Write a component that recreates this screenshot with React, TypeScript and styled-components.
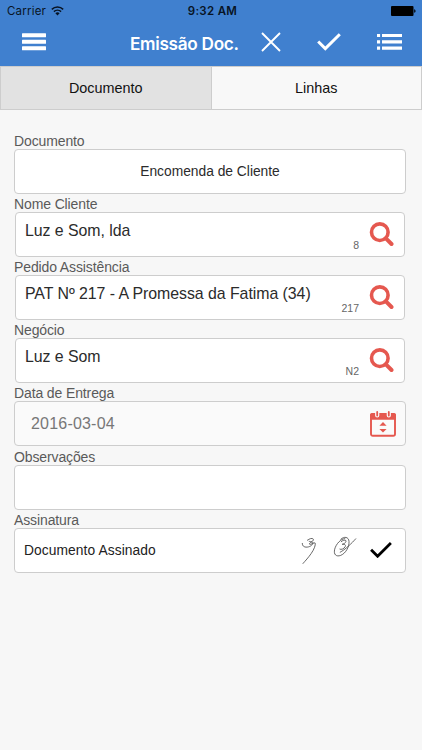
import React from "react";
import styled, { createGlobalStyle } from "styled-components";

const GlobalStyle = createGlobalStyle`
  * { box-sizing: border-box; }
  body { margin: 0; background: #f7f7f7; font-family: "Liberation Sans", Arial, sans-serif; }
  svg { display: block; flex: none; }
`;

const Screen = styled.main`
  width: 422px;
  height: 750px;
  background: #f7f7f7;
  overflow: hidden;
`;

const Header = styled.header`
  height: 66px;
  background: #4080cf;
`;

const StatusBar = styled.div`
  height: 22px;
  display: grid;
  grid-template-columns: 1fr auto 1fr;
  align-items: center;
  padding: 0 6px 0 7px;
  font: 400 11.5px/20px Inter, sans-serif;
  color: #081425;
`;

const Carrier = styled.div`
  display: flex;
  align-items: center;
  gap: 5px;
  letter-spacing: 0.2px;
`;

const Clock = styled.div`
  padding-left: 2px;
  font-weight: 600;
  letter-spacing: 0.3px;
`;

const Battery = styled.div`
  justify-self: end;
`;

const NavBar = styled.div`
  height: 44px;
  display: flex;
  align-items: center;
  padding: 0 20px 4px 22px;
`;

const Title = styled.h1`
  margin: 3px 0 0 84px;
  width: 131px;
  font: 600 17.2px/24px Inter, sans-serif;
  letter-spacing: -0.3px;
  color: #fff;
  white-space: nowrap;
`;

const Actions = styled.div`
  flex: 1;
  display: flex;
  justify-content: space-between;
  align-items: center;
`;

const Tabs = styled.nav`
  height: 44px;
  display: flex;
`;

const Tab = styled.button<{ $active?: boolean }>`
  flex: 1;
  padding: 0;
  border: 1px solid #cdcdcd;
  border-left-width: ${(p) => (p.$active ? "1px" : "0")};
  background: ${(p) => (p.$active ? "#e2e2e2" : "#f8f8f8")};
  font: 14.4px "Liberation Sans", sans-serif;
  color: #111;
`;

const Form = styled.section`
  padding: 21.1px 16px 0 14px;
`;

const Field = styled.div`
  height: 63.1px;
`;

const Label = styled.label`
  display: block;
  height: 18px;
  font-size: 14px;
  line-height: 20px;
  letter-spacing: -0.12px;
  color: #5a5a5a;
  white-space: nowrap;
`;

const Box = styled.div<{ $inset?: boolean; $tint?: boolean }>`
  height: 45px;
  margin: 0 ${(p) => (p.$inset ? "1px" : "0")};
  display: flex;
  align-items: center;
  border: 1px solid #cdcdcd;
  border-radius: 4px;
  background: ${(p) => (p.$tint ? "#fafafa" : "#fff")};
`;

const Choice = styled.span`
  flex: 1;
  text-align: center;
  font-size: 13.8px;
  line-height: 18px;
  padding-top: 1px;
  color: #2b2b2b;
`;

const LookupValue = styled.span`
  flex: 1;
  align-self: flex-start;
  padding: 8px 0 0 9px;
  font-size: 15.9px;
  line-height: 20px;
  letter-spacing: -0.05px;
  color: #2b2b2b;
  white-space: nowrap;
`;

const Code = styled.span`
  align-self: flex-end;
  padding-bottom: 4px;
  margin-right: 10px;
  font-size: 10.5px;
  line-height: 13px;
  color: #666;
`;

const DateValue = styled.span`
  flex: 1;
  padding-left: 16px;
  font-size: 16px;
  letter-spacing: 0.2px;
  color: #777;
`;

const SignedText = styled.span`
  flex: 1;
  padding: 1px 0 0 9px;
  font-size: 13.8px;
  letter-spacing: 0.08px;
  color: #222;
`;

const WifiIcon = () => (
  <svg width="13" height="10" viewBox="0 0 13 10" fill="none" stroke="#081425" strokeWidth="1.5">
    <path d="M.8 3.4a8.2 8.2 0 0 1 11.4 0M2.9 5.6a5.2 5.2 0 0 1 7.2 0" />
    <path d="M4.4 7.2a3 3 0 0 1 4.2 0L6.5 9.4Z" fill="#081425" stroke="none" />
  </svg>
);

const BatteryIcon = () => (
  <svg width="25" height="10" viewBox="0 0 25 10">
    <rect width="22.5" height="10" rx="1" />
    <path d="M23.2 3.2c1.8.3 1.8 3.3 0 3.6Z" />
  </svg>
);

const MenuIcon = () => (
  <svg width="24" height="18" viewBox="0 0 24 18" fill="#fff">
    <rect y="0.3" width="24" height="4" rx=".5" />
    <rect y="6.8" width="24" height="4" rx=".5" />
    <rect y="13.2" width="24" height="4" rx=".5" />
  </svg>
);

const CloseIcon = () => (
  <svg width="20" height="20" viewBox="0 0 20 20" stroke="#fff" strokeWidth="1.9">
    <path d="M1 1l18 18M19 1 1 19" />
  </svg>
);

const CheckIcon = ({ color, width }: { color: string; width: number }) => (
  <svg width={width} height={(width * 18) / 24} viewBox="0 0 24 18" fill="none" stroke={color} strokeWidth="3">
    <path d="M1.2 8.5 8.3 15.6 22.8 1.2" />
  </svg>
);

const ListIcon = () => (
  <svg width="25" height="16" viewBox="0 0 25 16" fill="#fff">
    <path d="M0 0h3.1v3.1H0zM5 0h20v3.1H5zM0 6.3h3.1v3.1H0zM5 6.3h20v3.1H5zM0 12.6h3.1v3.1H0zM5 12.6h20v3.1H5z" />
  </svg>
);

const SearchSvg = styled.svg`
  margin: 0 10px 0 0;
`;

const SearchIcon = () => (
  <SearchSvg width="25" height="25" viewBox="0 0 25 25" fill="none" stroke="#e5584f">
    <circle cx="10.8" cy="10.2" r="8.3" strokeWidth="3.6" />
    <path d="m16.9 16.4 5.6 5.6" strokeWidth="4" strokeLinecap="round" />
  </SearchSvg>
);

const CalendarSvg = styled.svg`
  margin: 0 9px 0 0;
`;

const CalendarIcon = () => (
  <CalendarSvg width="26" height="27" viewBox="0 0 26 27">
    <rect x="1" y="4" width="24" height="21.8" rx="1.8" fill="none" stroke="#e5584f" strokeWidth="1.9" />
    <path d="M0 9.7V5.3C0 4 1 3.1 2.2 3.1h21.6C25 3.1 26 4 26 5.3v4.4Z" fill="#e5584f" />
    <path d="M7.2 2v3.5M18.8 2v3.5" stroke="#fafafa" strokeWidth="4.2" strokeLinecap="round" />
    <path d="M7.2 2v3.5M18.8 2v3.5" stroke="#e5584f" strokeWidth="1.8" strokeLinecap="round" />
    <path d="m13 12 3.6 3.7H9.4ZM13 22.5l3.6-3.6H9.4Z" fill="#e5584f" />
  </CalendarSvg>
);

const SignatureSvg = styled.svg`
  margin-right: 13px;
`;

const SignatureIcon = () => (
  <SignatureSvg width="56" height="30" viewBox="0 0 56 30" fill="none" stroke="#444" strokeWidth=".8" strokeLinecap="round" strokeLinejoin="round">
    <path d="M6.4 5.2C8.3 3.8 11.3 2.6 12.3 4.1c.6 2-2.3 3.3-4.2 2.2M1.3 8.4c-.2 3.2 2.8 4.3 6.1 3.5 4-.9 5.4-4.4 3.9-4.7-1.2-.3-3.4 1-2.7 2 1.1 1.2 4.7-2.6 5.6-1.1.6 1.5-1 6.2-4 10.4-2.5 3.7-6 7.5-8.2 10" />
    <path d="M43.8 3.6C39.9 3.7 35 9 33.7 14.2c-1.4 5.5 1.7 7.8 6 6.2 5.4-2.2 8.7-9.1 8.3-14-.3-4.5-4.8-5.4-8.2-2.2M40.2 6.7c2.1-2 5-2.2 4.8-.4-.2 1.7-2.9 3-3.8 3 2.6-.3 4 .6 2.9 2.5-1.2 2.1-4 3.2-5.2 2.4M54.7 3.8C51 8.1 44 14.8 39.2 17.2" />
  </SignatureSvg>
);

const SignedCheck = styled.div`
  margin: 0 13px 0 0;
`;

const LookupField = ({ label, value, code }: { label: string; value: string; code: string }) => (
  <Field>
    <Label>{label}</Label>
    <Box $inset>
      <LookupValue>{value}</LookupValue>
      <Code>{code}</Code>
      <SearchIcon />
    </Box>
  </Field>
);

export default function App() {
  return (
    <>
      <GlobalStyle />
      <Screen>
        <Header>
          <StatusBar>
            <Carrier>Carrier <WifiIcon /></Carrier>
            <Clock>9:32 AM</Clock>
            <Battery><BatteryIcon /></Battery>
          </StatusBar>
          <NavBar>
            <MenuIcon />
            <Title>Emissão Doc.</Title>
            <Actions>
              <CloseIcon />
              <CheckIcon color="#fff" width={24} />
              <ListIcon />
            </Actions>
          </NavBar>
        </Header>
        <Tabs>
          <Tab $active>Documento</Tab>
          <Tab>Linhas</Tab>
        </Tabs>
        <Form>
          <Field>
            <Label>Documento</Label>
            <Box><Choice>Encomenda de Cliente</Choice></Box>
          </Field>
          <LookupField label="Nome Cliente" value="Luz e Som, lda" code="8" />
          <LookupField label="Pedido Assistência" value="PAT Nº 217 - A Promessa da Fatima (34)" code="217" />
          <LookupField label="Negócio" value="Luz e Som" code="N2" />
          <Field>
            <Label>Data de Entrega</Label>
            <Box $tint><DateValue>2016-03-04</DateValue><CalendarIcon /></Box>
          </Field>
          <Field>
            <Label>Observações</Label>
            <Box />
          </Field>
          <Field>
            <Label>Assinatura</Label>
            <Box>
              <SignedText>Documento Assinado</SignedText>
              <SignatureIcon />
              <SignedCheck><CheckIcon color="#000" width={22} /></SignedCheck>
            </Box>
          </Field>
        </Form>
      </Screen>
    </>
  );
}
